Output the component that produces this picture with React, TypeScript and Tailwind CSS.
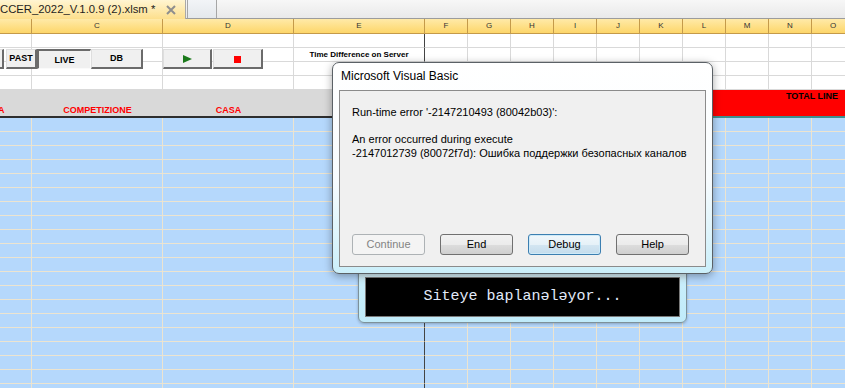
import React from 'react';

const letters = ['', 'C', 'D', 'E', 'F', 'G', 'H', 'I', 'J', 'K', 'L', 'M', 'N', 'O'];
const gridCols = 'grid grid-cols-[32px_131px_131px_131px_repeat(10,43px)]';
const sans = "font-['Liberation_Sans',Arial,sans-serif]";

function Row({ blue, cells }: { blue?: boolean; cells?: Record<number, React.ReactNode> }) {
  return (
    <div className={`${gridCols} h-[14px]`}>
      {letters.map((_, i) => (
        <div
          key={i}
          className={`flex items-center justify-center border-b border-r ${
            blue ? 'bg-[#b5d8fc] border-[#ece4d0]' : 'bg-white border-[#d9d9d9]'
          } ${i === 3 ? 'border-r-[#444444]' : ''}`}
        >
          {cells?.[i]}
        </div>
      ))}
    </div>
  );
}

function SheetBtn({ className, pressed, children }: { className: string; pressed?: boolean; children?: React.ReactNode }) {
  return (
    <div
      className={`absolute top-[49px] h-[20px] flex items-center justify-center bg-[#f0f0f0] text-[9px] font-bold text-black ${sans} ${
        pressed
          ? 'border-t-2 border-l-2 border-r border-b border-t-[#6b6b6b] border-l-[#6b6b6b] border-r-[#fafafa] border-b-[#fafafa] pt-[3px]'
          : 'border-t border-l border-r-2 border-b-2 border-t-[#dedede] border-l-[#dedede] border-r-[#6b6b6b] border-b-[#6b6b6b]'
      } ${className}`}
    >
      {children}
    </div>
  );
}

function DlgButton({ label, kind }: { label: string; kind?: 'disabled' | 'focus' }) {
  const look =
    kind === 'disabled'
      ? 'border-[#adb2b5] bg-[#f4f4f4] text-[#838383]'
      : kind === 'focus'
        ? 'border-[#3c7fb1] bg-[linear-gradient(#f0f7fb_0%,#e6f1f8_50%,#d4e6f2_50%,#c4dcec_100%)] text-black shadow-[inset_0_0_0_1px_#cfeaf8]'
        : 'border-[#707070] bg-[linear-gradient(#f2f2f2_0%,#ebebeb_50%,#dddddd_50%,#cfcfcf_100%)] text-black';
  return (
    <div className={`w-[73px] h-[21px] rounded-[3px] border flex items-center justify-center text-[11px] ${look}`}>
      {label}
    </div>
  );
}

export default function App() {
  return (
    <div className={`relative w-[845px] h-[388px] overflow-hidden bg-white ${sans}`}>
      {/* workbook tab strip */}
      <div className="h-[19px] flex">
        <div className="w-[186px] shrink-0 flex items-center justify-between pr-[9px] bg-[linear-gradient(#fff5d2,#fddf8c)] border-r border-[#a9a9a9]">
          <span className="text-[11.3px] text-[#1e1e1e] whitespace-nowrap leading-none">CCER_2022_V.1.0.9 (2).xlsm *</span>
          <svg width="10" height="10" viewBox="0 0 10 10" className="mt-[1px]">
            <path d="M1 1 L9 9 M9 1 L1 9" stroke="#8e8e8e" strokeWidth="2" />
          </svg>
        </div>
        <div className="flex-1 flex border-b border-[#9c9c9c] bg-[linear-gradient(#f7f7f7,#e9e9e9)]">
          <div className="w-[30px] ml-[1px] border-r border-l border-[#a6a6a6] bg-[linear-gradient(#f2f4f7,#e4e8ec)]" />
        </div>
      </div>

      {/* column headers */}
      <div className={`${gridCols} h-[15px]`}>
        {letters.map((l, i) => (
          <div
            key={i}
            className="flex items-center justify-center border-r border-b border-[#c49a4a] bg-[linear-gradient(#ffeaa8,#fdd66a)] text-[8px] text-[#333]"
          >
            {l}
          </div>
        ))}
      </div>

      <Row />
      <Row
        cells={{
          3: <span className="text-[8px] font-bold text-black whitespace-nowrap pt-[1px]">Time Difference on Server</span>,
        }}
      />
      <Row />
      <Row />

      {/* header band */}
      <div className={`${gridCols} h-[28px]`}>
        <div className="bg-[#d9d9d9] border-b-2 border-[#2e2e2e] pt-[15px] text-[9px] leading-[11px] font-bold text-[#ff0000] overflow-hidden">
          <span className="block -ml-[2px]">A</span>
        </div>
        <div className="bg-[#d9d9d9] border-b-2 border-[#2e2e2e] pt-[15px] text-[9px] leading-[11px] font-bold text-[#ff0000] text-center">
          COMPETIZIONE
        </div>
        <div className="bg-[#d9d9d9] border-b-2 border-[#2e2e2e] pt-[15px] text-[9px] leading-[11px] font-bold text-[#ff0000] text-center">
          CASA
        </div>
        <div className="bg-[#d9d9d9] border-b-2 border-[#2e2e2e]" />
        <div className="col-span-10 bg-[#ff0000] border-b-2 border-[#3f8f8f] pt-[1px] pr-[17px] text-[9px] leading-[11px] font-bold text-black text-right">
          TOTAL LINE
        </div>
      </div>

      {Array.from({ length: 20 }).map((_, i) => (
        <Row key={i} blue />
      ))}

      {/* sheet controls */}
      <SheetBtn className="left-[-40px] w-[44px]" />
      <SheetBtn className="left-[6px] w-[31px]">PAST</SheetBtn>
      <SheetBtn className="left-[37px] w-[54px]" pressed>
        LIVE
      </SheetBtn>
      <SheetBtn className="left-[91px] w-[52px]">DB</SheetBtn>
      <SheetBtn className="left-[163px] w-[49px]">
        <svg width="9" height="8" viewBox="0 0 9 8">
          <polygon points="0,0 9,4 0,8" fill="#1b7a1b" />
        </svg>
      </SheetBtn>
      <SheetBtn className="left-[213px] w-[50px]">
        <div className="w-[7px] h-[7px] bg-[#ff0000] mt-[1px]" />
      </SheetBtn>

      {/* progress box behind dialog */}
      <div className="absolute left-[358px] top-[255px] w-[329px] h-[68px] rounded-b-[6px] border border-[#7d919a] bg-[linear-gradient(180deg,#ffffff,#c9eefb_40%,#c0ebfa)] px-[6px] pt-[21px] pb-[5px] shadow-[0_1px_3px_rgba(0,0,0,0.25)]">
        <div className="h-[40px] bg-black border border-[#7a7a7a] flex items-center justify-center font-['Liberation_Mono','Courier_New',monospace] text-[15px] text-[#e2eafa] whitespace-pre">
          Siteye baplanələyor...
        </div>
      </div>

      {/* VBA error dialog */}
      <div className="absolute left-[332px] top-[62px] w-[381px] h-[212px] rounded-[7px] border border-[#5b6166] bg-[linear-gradient(180deg,#ffffff_0%,#f8fcfe_55%,#cbeffa_100%)] shadow-[0_2px_8px_rgba(0,0,0,0.35)] flex flex-col px-[6px] pb-[6px]">
        <div className="h-[27px] shrink-0 flex items-center pl-[2px] pb-[1px] text-[12px] text-black">Microsoft Visual Basic</div>
        <div className="flex-1 border border-[#8b8b8b] bg-[#f0f0f0] flex flex-col pl-[12px] pt-[14px] pb-[11px]">
          <div className="text-[11px] leading-[14px] text-black">
            <p>Run-time error '-2147210493 (80042b03)':</p>
            <p className="mt-[13px]">An error occurred during execute</p>
            <p>-2147012739 (80072f7d): Ошибка поддержки безопасных каналов</p>
          </div>
          <div className="mt-auto flex gap-[15px]">
            <DlgButton label="Continue" kind="disabled" />
            <DlgButton label="End" />
            <DlgButton label="Debug" kind="focus" />
            <DlgButton label="Help" />
          </div>
        </div>
      </div>
    </div>
  );
}
